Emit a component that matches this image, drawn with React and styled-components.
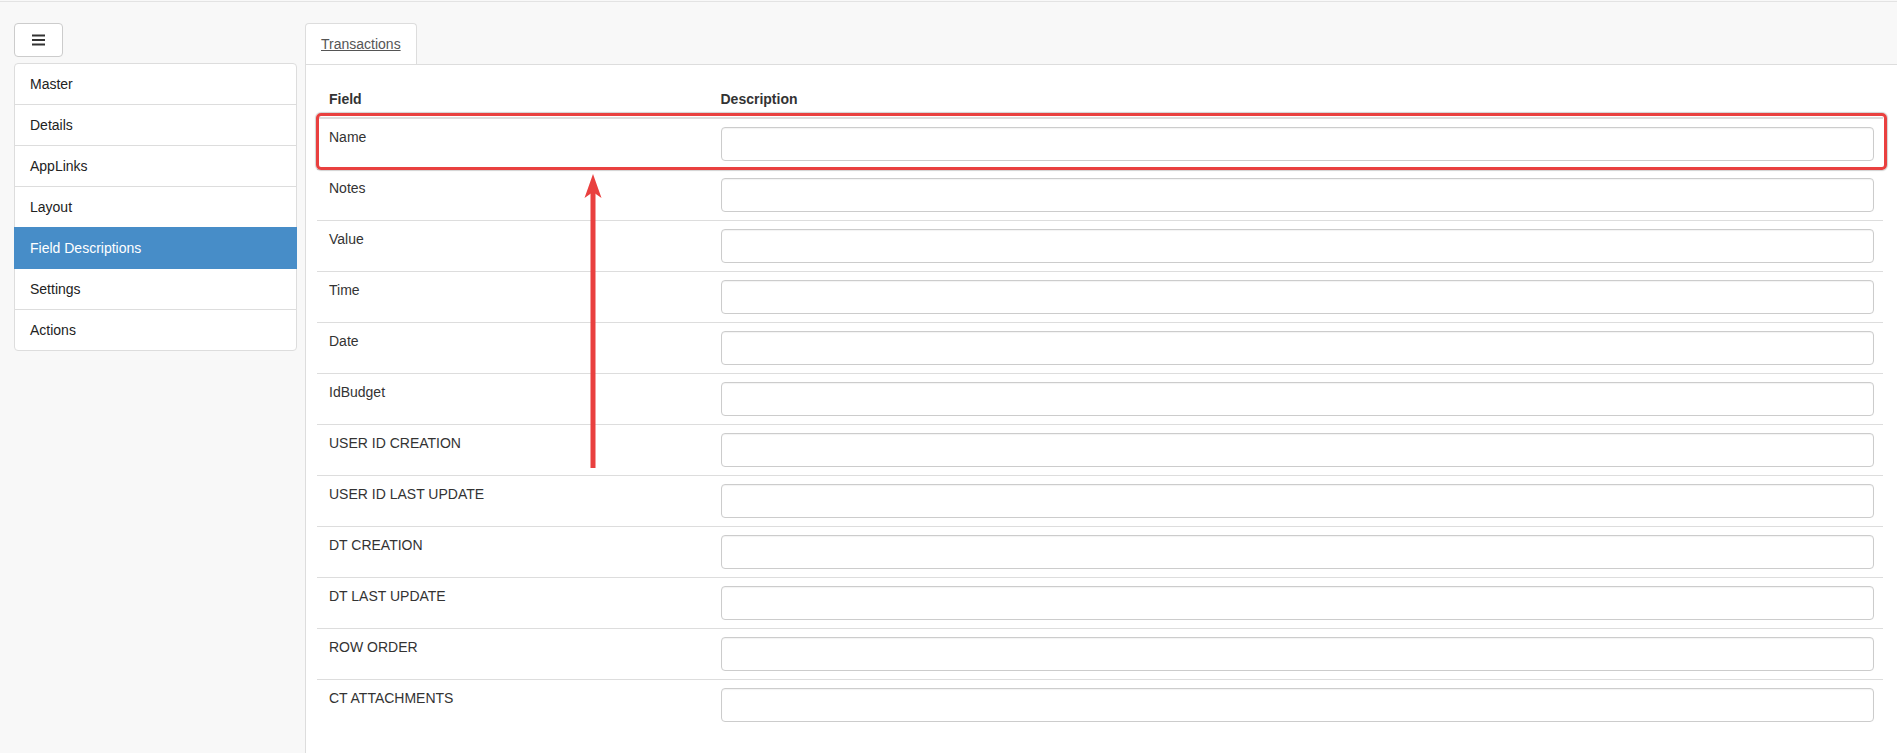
import React from "react";
import styled, { createGlobalStyle } from "styled-components";

const GlobalStyle = createGlobalStyle`
  html, body {
    margin: 0;
    padding: 0;
    background: #f8f8f8;
  }
  body {
    padding-top: 1px;
    font-family: "Liberation Sans", Arial, sans-serif;
    font-size: 14px;
    line-height: 20px;
    color: #333;
  }
`;

const Page = styled.div`
  display: flex;
  align-items: stretch;
  min-height: calc(100vh - 2px);
  border-top: 1px solid #e3e3e3;
  background: #f8f8f8;
`;

const Sidebar = styled.aside`
  width: 283px;
  margin-left: 14px;
  padding-top: 21px;
  flex-shrink: 0;
`;

const ToggleButton = styled.button`
  display: flex;
  align-items: center;
  justify-content: center;
  width: 49px;
  height: 34px;
  padding: 0;
  margin-bottom: 6px;
  background: #fff;
  border: 1px solid #ccc;
  border-radius: 4px;
  color: #333;
  cursor: pointer;
`;

const MenuList = styled.ul`
  list-style: none;
  margin: 0;
  padding: 0;
`;

const MenuItem = styled.li`
  position: relative;
  padding: 10px 15px;
  margin-bottom: -1px;
  background: ${({ $active }) => ($active ? "#478dc8" : "#fff")};
  color: ${({ $active }) => ($active ? "#fff" : "#222")};
  border: 1px solid ${({ $active }) => ($active ? "#478dc8" : "#ddd")};
  z-index: ${({ $active }) => ($active ? 2 : 1)};
  cursor: pointer;

  &:first-child {
    border-top-left-radius: 4px;
    border-top-right-radius: 4px;
  }
  &:last-child {
    border-bottom-left-radius: 4px;
    border-bottom-right-radius: 4px;
  }
`;

const Main = styled.main`
  flex: 1;
  display: flex;
  flex-direction: column;
  margin-left: 8px;
  padding-top: 21px;
`;

const TabBar = styled.div`
  display: flex;
`;

const Tab = styled.a`
  display: block;
  padding: 10px 15px;
  background: #fff;
  border: 1px solid #ddd;
  border-bottom: none;
  border-radius: 4px 4px 0 0;
  color: #555;
  text-decoration: underline;
  cursor: pointer;
`;

const Panel = styled.section`
  position: relative;
  flex: 1;
  background: #fff;
  border-top: 1px solid #ddd;
  border-left: 1px solid #ddd;
  padding: 16px 14px 0 11px;
`;

const Table = styled.table`
  width: 100%;
  border-collapse: collapse;
  table-layout: fixed;
`;

const HeadCell = styled.th`
  box-sizing: border-box;
  width: ${({ $width }) => $width || "auto"};
  padding: 8px 9px 8px 12px;
  text-align: left;
  font-weight: bold;
  color: #333;
  border-bottom: 2px solid #ddd;
`;

const Row = styled.tr`
  & + & td {
    border-top: 1px solid #ddd;
  }
`;

const Cell = styled.td`
  box-sizing: border-box;
  padding: 8px 9px 8px 12px;
  vertical-align: top;
  color: #333;
`;

const DescInput = styled.input`
  display: block;
  box-sizing: border-box;
  width: 100%;
  height: 34px;
  padding: 6px 12px;
  border: 1px solid #ccc;
  border-radius: 4px;
  background: #fff;
  box-shadow: inset 0 1px 1px rgba(0, 0, 0, 0.05);
  font-family: inherit;
  font-size: 14px;
  color: #555;
  outline: none;
`;

const Highlight = styled.div`
  position: absolute;
  left: 10px;
  top: 48px;
  width: 1571px;
  height: 57px;
  box-sizing: border-box;
  border: 3px solid #e9403f;
  border-radius: 5px;
  box-shadow: 0 0 1px 1px rgba(0, 0, 0, 0.18);
  pointer-events: none;
`;

const ArrowMark = styled.svg`
  position: absolute;
  left: 277px;
  top: 107px;
  pointer-events: none;
`;

const menu = [
  "Master",
  "Details",
  "AppLinks",
  "Layout",
  "Field Descriptions",
  "Settings",
  "Actions",
];

const fields = [
  "Name",
  "Notes",
  "Value",
  "Time",
  "Date",
  "IdBudget",
  "USER ID CREATION",
  "USER ID LAST UPDATE",
  "DT CREATION",
  "DT LAST UPDATE",
  "ROW ORDER",
  "CT ATTACHMENTS",
];

const HamburgerIcon = () => (
  <svg width="13" height="12" viewBox="0 0 13 12">
    <rect x="0" y="0.5" width="13" height="2" fill="#333" />
    <rect x="0" y="5" width="13" height="2" fill="#333" />
    <rect x="0" y="9.5" width="13" height="2" fill="#333" />
  </svg>
);

export default function App() {
  return (
    <>
      <GlobalStyle />
      <Page>
        <Sidebar>
          <ToggleButton aria-label="Toggle menu">
            <HamburgerIcon />
          </ToggleButton>
          <MenuList>
            {menu.map((item) => (
              <MenuItem key={item} $active={item === "Field Descriptions"}>
                {item}
              </MenuItem>
            ))}
          </MenuList>
        </Sidebar>

        <Main>
          <TabBar>
            <Tab>Transactions</Tab>
          </TabBar>
          <Panel>
            <Table>
              <thead>
                <tr>
                  <HeadCell $width="25%">Field</HeadCell>
                  <HeadCell>Description</HeadCell>
                </tr>
              </thead>
              <tbody>
                {fields.map((f) => (
                  <Row key={f}>
                    <Cell>{f}</Cell>
                    <Cell>
                      <DescInput type="text" />
                    </Cell>
                  </Row>
                ))}
              </tbody>
            </Table>

            <Highlight />
            <ArrowMark width="20" height="300" viewBox="0 0 20 300">
              <rect x="7.5" y="20" width="5" height="276" fill="#e9403f" />
              <polygon points="10,2 1.5,26 10,20 18.5,26" fill="#e9403f" />
            </ArrowMark>
          </Panel>
        </Main>
      </Page>
    </>
  );
}
